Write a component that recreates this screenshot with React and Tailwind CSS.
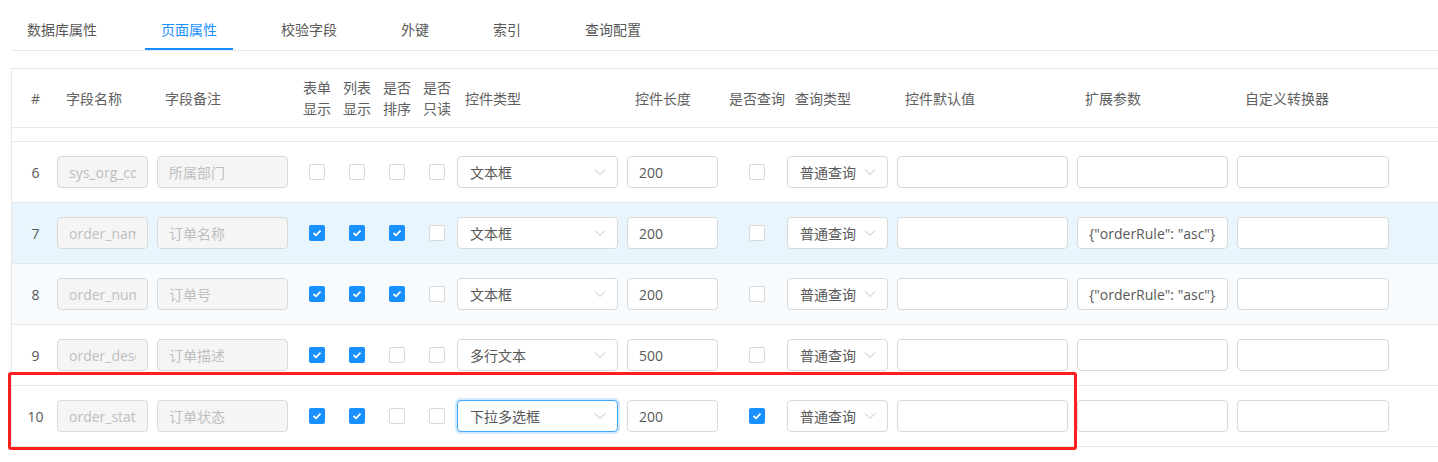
import React from "react";

const FONT = { fontFamily: '"Open Sans", "Noto Sans CJK SC", sans-serif' };

const tabs = ["数据库属性", "页面属性", "校验字段", "外键", "索引", "查询配置"];

const rows = [
  { n: 6, name: "sys_org_code", remark: "所属部门", c: [0, 0, 0, 0], type: "文本框", len: "200", q: 0, ext: "", bg: "bg-white" },
  { n: 7, name: "order_name", remark: "订单名称", c: [1, 1, 1, 0], type: "文本框", len: "200", q: 0, ext: '{"orderRule": "asc"}', bg: "bg-[#e8f5fd]" },
  { n: 8, name: "order_num", remark: "订单号", c: [1, 1, 1, 0], type: "文本框", len: "200", q: 0, ext: '{"orderRule": "asc"}', bg: "bg-[#f7fbfe]" },
  { n: 9, name: "order_desc", remark: "订单描述", c: [1, 1, 0, 0], type: "多行文本", len: "500", q: 0, ext: "", bg: "bg-white" },
  { n: 10, name: "order_status", remark: "订单状态", c: [1, 1, 0, 0], type: "下拉多选框", len: "200", q: 1, ext: "", bg: "bg-white", focus: true },
];

function Check({ on }) {
  return on ? (
    <div className="w-[16px] h-[16px] rounded-[2px] bg-[#1890ff] flex items-center justify-center">
      <svg width="10" height="8" viewBox="0 0 10 8">
        <polyline points="1.5,4 4,6.3 8.5,1.6" fill="none" stroke="white" strokeWidth="1.8" />
      </svg>
    </div>
  ) : (
    <div className="w-[16px] h-[16px] rounded-[2px] bg-white border border-[#d9d9d9]" />
  );
}

function Input({ value, w, disabled }) {
  return (
    <input
      readOnly
      value={value}
      style={FONT}
      className={`h-[32px] ${w} rounded-[4px] border border-[#d9d9d9] px-[11px] text-[14px] outline-none ${
        disabled ? "bg-[#f5f5f5] text-[#bfbfbf]" : "bg-white text-[#595959]"
      }`}
    />
  );
}

function Select({ value, w, focus }) {
  return (
    <div
      className={`h-[32px] ${w} rounded-[4px] border bg-white flex items-center justify-between pl-[12px] pr-[11px] text-[14px] text-[#595959] ${
        focus ? "border-[#40a9ff] shadow-[0_0_0_2px_rgba(24,144,255,0.2)]" : "border-[#d9d9d9]"
      }`}
    >
      <span className="whitespace-nowrap">{value}</span>
      <svg width="12" height="8" viewBox="0 0 12 8">
        <polyline points="1,1.5 6,6.5 11,1.5" fill="none" stroke="#bfbfbf" strokeWidth="1" />
      </svg>
    </div>
  );
}

function Two({ a, b }) {
  return (
    <div className="flex flex-col items-center leading-[21px]">
      <span>{a}</span>
      <span>{b}</span>
    </div>
  );
}

export default function App() {
  return (
    <div style={FONT} className="relative w-[1438px] h-[462px] bg-white overflow-hidden text-[14px] text-[#595959]">
      {/* Tabs */}
      <div className="ml-[11px] pt-[19px] flex gap-[32px] border-b border-[#e8e8e8]">
        {tabs.map((t, i) => (
          <div
            key={t}
            className={`px-[16px] pb-[7px] leading-[22px] border-b-2 ${
              i === 1 ? "text-[#1890ff] border-[#1890ff]" : "border-transparent"
            }`}
          >
            {t}
          </div>
        ))}
      </div>

      {/* Table */}
      <div className="mt-[17px] ml-[11px] border-t border-l border-[#e8e8e8]">
        {/* header */}
        <div className="flex h-[59px] items-center border-b border-[#e8e8e8] text-[#606060]">
          <div className="w-[41px] pl-[6px] text-center">#</div>
          <div className="w-[100px] pl-[13px]">字段名称</div>
          <div className="w-[144px] pl-[12px]">字段备注</div>
          <div className="w-[40px] flex justify-center"><Two a="表单" b="显示" /></div>
          <div className="w-[40px] flex justify-center"><Two a="列表" b="显示" /></div>
          <div className="w-[40px] flex justify-center"><Two a="是否" b="排序" /></div>
          <div className="w-[40px] flex justify-center"><Two a="是否" b="只读" /></div>
          <div className="w-[166px] pl-[8px]">控件类型</div>
          <div className="w-[104px] pl-[12px]">控件长度</div>
          <div className="w-[60px] text-center whitespace-nowrap">是否查询</div>
          <div className="w-[106px] pl-[8px]">查询类型</div>
          <div className="w-[180px] pl-[12px]">控件默认值</div>
          <div className="w-[160px] pl-[12px]">扩展参数</div>
          <div className="flex-1 pl-[12px]">自定义转换器</div>
        </div>
        <div className="h-[14px] border-b border-[#e8e8e8]" />
        {rows.map((r) => (
          <div key={r.n} className={`flex h-[61px] items-center border-b border-[#e8e8e8] ${r.bg}`}>
            <div className="w-[41px] pl-[6px] text-center">{r.n}</div>
            <div className="w-[100px] pl-[4px]"><Input value={r.name} w="w-[91px]" disabled /></div>
            <div className="w-[144px] pl-[4px]"><Input value={r.remark} w="w-[131px]" disabled /></div>
            {r.c.map((v, i) => (
              <div key={i} className="w-[40px] flex justify-center"><Check on={v} /></div>
            ))}
            <div className="w-[166px]"><Select value={r.type} w="w-[161px]" focus={r.focus} /></div>
            <div className="w-[104px] pl-[4px]"><Input value={r.len} w="w-[91px]" /></div>
            <div className="w-[60px] flex justify-center"><Check on={r.q} /></div>
            <div className="w-[106px]"><Select value="普通查询" w="w-[101px]" /></div>
            <div className="w-[180px] pl-[4px]"><Input value="" w="w-[171px]" /></div>
            <div className="w-[160px] pl-[4px]"><Input value={r.ext} w="w-[151px]" /></div>
            <div className="flex-1 pl-[4px]"><Input value="" w="w-[152px]" /></div>
          </div>
        ))}
      </div>

      {/* annotation box */}
      <div className="absolute left-[8px] top-[372px] w-[1069px] h-[78px] border-[3px] border-[#ff1f1f] rounded-[3px] pointer-events-none" />
    </div>
  );
}
